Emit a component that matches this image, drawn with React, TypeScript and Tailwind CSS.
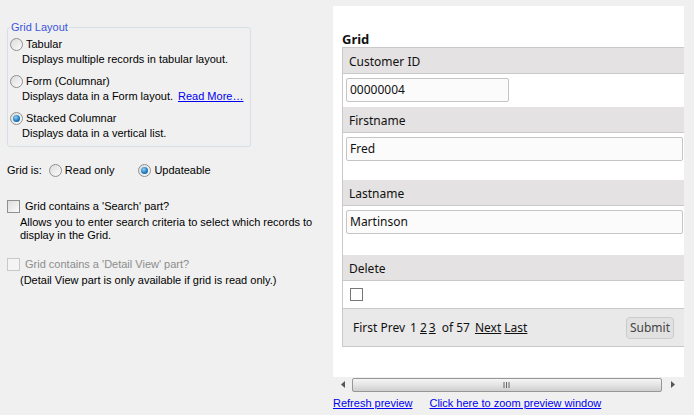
import React from "react";

const tahoma = { fontFamily: '"Liberation Sans", Arial, sans-serif' };

function Radio({ checked = false }: { checked?: boolean }) {
  return (
    <span className="relative inline-flex h-[13px] w-[13px] shrink-0 items-center justify-center rounded-full border border-[#8e8f8f] bg-gradient-to-br from-[#dcdcdc] to-[#fbfbfb]">
      {checked && (
        <span className="h-[7px] w-[7px] rounded-full bg-[radial-gradient(circle_at_40%_35%,#8fd2f5,#1a74b8_60%,#0d4f8a)]" />
      )}
    </span>
  );
}

function Checkbox({ disabled = false }: { disabled?: boolean }) {
  return (
    <span
      className={
        disabled
          ? "inline-block h-[13px] w-[13px] shrink-0 border border-[#c8c8c8] bg-[#f4f4f4]"
          : "inline-block h-[13px] w-[13px] shrink-0 border border-[#8e8f8f] bg-gradient-to-br from-[#dedede] to-[#fbfbfb]"
      }
    />
  );
}

function LayoutOption({
  label,
  desc,
  checked,
  link,
}: {
  label: string;
  desc: string;
  checked?: boolean;
  link?: string;
}) {
  return (
    <div className="flex flex-col whitespace-nowrap">
      <div className="flex items-center gap-[3px]">
        <Radio checked={checked} />
        <span>{label}</span>
      </div>
      <div className="mt-[1px] pl-[12px]">
        {desc}
        {link && <span className="ml-[5px] text-[#0000ee] underline">{link}</span>}
      </div>
    </div>
  );
}

function HeaderRow({ children }: { children: React.ReactNode }) {
  return (
    <div className="flex h-[26px] items-center border-b border-[#c9c9c9] bg-[#e4e2e2] pl-[6px] pt-[3px]">
      {children}
    </div>
  );
}

function TextBox({ value, className }: { value: string; className: string }) {
  return (
    <div
      className={
        "flex h-[24px] items-center rounded-[2px] border border-[#c5c5c5] bg-[#fbfbfb] pl-[3px] " +
        className
      }
    >
      {value}
    </div>
  );
}

export default function App() {
  return (
    <div
      className="flex h-[415px] w-[694px] overflow-hidden bg-[#f0f0f0] text-[11px] text-black"
      style={tahoma}
    >
      {/* left options */}
      <div className="w-[333px] shrink-0 pl-[7px] pt-[27px]">
        <div className="relative w-[244px] rounded-[3px] border border-[#d5dfe5] px-[2px] pb-[6px] pt-[9px]">
          <span className="absolute left-[2px] top-[-8px] bg-[#f0f0f0] px-[1px] leading-[14px] text-[#3b55e0]">
            Grid Layout
          </span>
          <div className="flex flex-col gap-[8px] leading-[14px]">
            <LayoutOption label="Tabular" desc="Displays multiple records in tabular layout." />
            <LayoutOption
              label="Form (Columnar)"
              desc="Displays data in a Form layout."
              link="Read More…"
            />
            <LayoutOption label="Stacked Columnar" desc="Displays data in a vertical list." checked />
          </div>
        </div>

        <div className="mt-[16px] flex items-center leading-[14px]">
          <span>Grid is:</span>
          <span className="ml-[7px] flex items-center gap-[3px]">
            <Radio />
            Read only
          </span>
          <span className="ml-[24px] flex items-center gap-[3px]">
            <Radio checked />
            Updateable
          </span>
        </div>

        <div className="mt-[23px] leading-[13px]">
          <div className="flex items-center gap-[5px]">
            <Checkbox />
            <span>Grid contains a 'Search' part?</span>
          </div>
          <div className="mt-[3px] pl-[13px]">
            Allows you to enter search criteria to select which records to
            <br />
            display in the Grid.
          </div>
        </div>

        <div className="mt-[16px] leading-[13px]">
          <div className="flex items-center gap-[5px] text-[#8d8d8d]">
            <Checkbox disabled />
            <span>Grid contains a 'Detail View' part?</span>
          </div>
          <div className="mt-[3px] pl-[13px]">
            (Detail View part is only available if grid is read only.)
          </div>
        </div>
      </div>

      {/* preview */}
      <div className="flex w-[351px] shrink-0 flex-col pt-[6px]">
        <div
          className="h-[371px] overflow-hidden bg-white pl-[9px] pt-[25px] text-[12px] text-[#111]"
          style={{ fontFamily: '"Noto Sans", "Open Sans", sans-serif' }}
        >
          <div className="text-[13px] font-bold leading-[16px]">Grid</div>
          <div className="w-[360px] border-l border-t border-[#c9c9c9]">
            <HeaderRow>Customer ID</HeaderRow>
            <div className="h-[33px] pl-[3px] pt-[4px]">
              <TextBox value="00000004" className="w-[163px]" />
            </div>
            <HeaderRow>Firstname</HeaderRow>
            <div className="h-[47px] pl-[3px] pt-[4px]">
              <TextBox value="Fred" className="w-[337px]" />
            </div>
            <HeaderRow>Lastname</HeaderRow>
            <div className="h-[49px] pl-[3px] pt-[4px]">
              <TextBox value="Martinson" className="w-[337px]" />
            </div>
            <HeaderRow>Delete</HeaderRow>
            <div className="flex h-[28px] items-center border-b border-[#c9c9c9] pl-[7px]">
              <span className="inline-block h-[13px] w-[13px] border border-[#777]" />
            </div>
            <div className="flex h-[38px] items-center border-b border-[#c9c9c9] bg-[#e9e9e9] pl-[10px]">
              <div className="flex w-[321px] items-center">
                <span>First Prev</span>
                <span className="ml-[5px]">1</span>
                <span className="ml-[3px] underline">2</span>
                <span className="ml-[2px] underline">3</span>
                <span className="ml-[6px]">of 57</span>
                <span className="ml-[5px] underline">Next</span>
                <span className="ml-[3px] underline">Last</span>
                <span className="ml-auto flex h-[22px] w-[48px] items-center justify-center rounded-[4px] border border-[#cbcbcb] bg-[#e1e1e1] text-[#444]">
                  Submit
                </span>
              </div>
            </div>
          </div>
        </div>

        {/* horizontal scrollbar */}
        <div className="flex h-[15px] items-center bg-[#f0f0f0]">
          <span className="flex w-[19px] justify-center">
            <svg width="4" height="7" viewBox="0 0 4 7">
              <path d="M4 0 L0 3.5 L4 7 Z" fill="#555" />
            </svg>
          </span>
          <div className="relative flex h-[14px] w-[310px] items-center justify-center rounded-[2px] border border-[#979797] bg-gradient-to-b from-[#f5f5f5] via-[#e4e4e4] to-[#cfcfcf]">
            <svg width="8" height="6" viewBox="0 0 8 6">
              <path d="M1 0v6M3.5 0v6M6 0v6" stroke="#666" strokeWidth="1" />
            </svg>
          </div>
          <span className="flex w-[22px] justify-center">
            <svg width="4" height="7" viewBox="0 0 4 7">
              <path d="M0 0 L4 3.5 L0 7 Z" fill="#555" />
            </svg>
          </span>
        </div>

        <div className="mt-[4px] flex gap-[17px] leading-[14px] text-[#0000ee] underline">
          <span>Refresh preview</span>
          <span>Click here to zoom preview window</span>
        </div>
      </div>
    </div>
  );
}
